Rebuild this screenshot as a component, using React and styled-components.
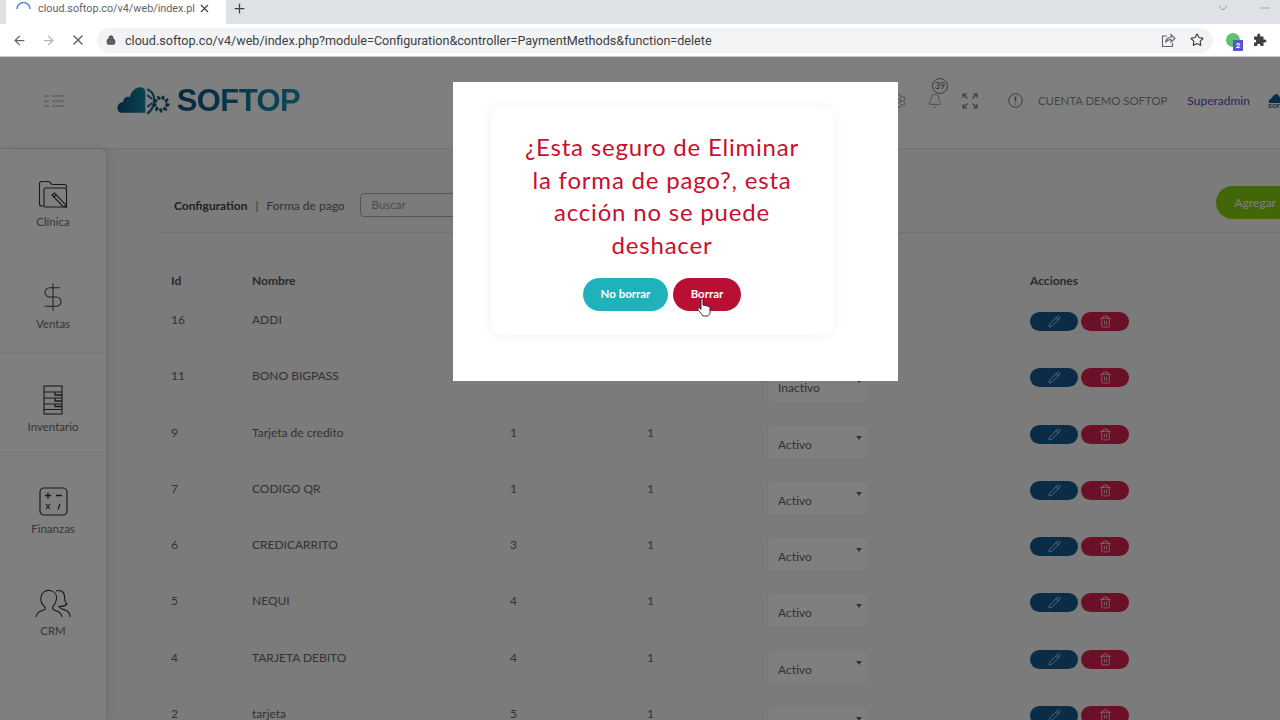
import React from "react";
import styled, { createGlobalStyle } from "styled-components";
import { ArrowLeft, ArrowRight, X, Lock, Star, Plus, ChevronDown, Minus, Pencil, Trash2, Settings, Bell, DollarSign } from "lucide-react";

const Global = createGlobalStyle`
html, body { margin: 0; padding: 0; height: 100%; overflow: hidden; background: #fff; }
* { box-sizing: border-box; }
`

const uiFont = `"Lato", "Open Sans", sans-serif`

const Browser = styled.div`
width: 1280px;
height: 720px;
display: flex;
flex-direction: column;
overflow: hidden;
font-family: ${uiFont};
`

const TabStrip = styled.div`
height: 24px;
flex: none;
background: #dee1e6;
display: flex;
align-items: flex-start;
color: #3c4043;
`

const Tab = styled.div`
width: 220px;
height: 24px;
margin-left: 6px;
padding: 0 8px 7px 10px;
background: #fff;
display: flex;
align-items: center;
gap: 7px;
font: 10.8px Roboto, sans-serif;
color: #5f6368;
`

const TabTitle = styled.span`
width: 153px;
white-space: nowrap;
`

const NewTab = styled.div`
margin-left: 6px;
height: 17px;
display: flex;
align-items: center;
`

const WindowButtons = styled.div`
margin-left: auto;
height: 15px;
display: flex;
align-items: center;
gap: 27px;
padding-right: 8px;
color: #80868b;
`

const Toolbar = styled.div`
height: 33px;
flex: none;
background: #fff;
border-bottom: 1px solid #c9c9c9;
display: flex;
align-items: center;
color: #5f6368;
padding-left: 12px;
`

const NavButtons = styled.div`
display: flex;
align-items: center;
gap: 14px;
width: 85px;
`

const Omnibox = styled.div`
width: 1116px;
height: 25px;
border-radius: 13px;
background: #f1f3f4;
display: flex;
align-items: center;
padding: 0 9px;
gap: 9px;
font: 12.6px Roboto, sans-serif;
color: #3c4043;
`

const Url = styled.span`
flex: 1;
white-space: nowrap;
`

const OmniIcons = styled.div`
display: flex;
align-items: center;
gap: 14px;
`

const Extensions = styled.div`
display: flex;
align-items: center;
gap: 13px;
margin-left: 13px;
`

const ExtBadge = styled.div`
position: relative;
width: 14px;
height: 14px;
border-radius: 50%;
background: #5cc46a;
`

const ExtCount = styled.span`
position: absolute;
left: 7px;
top: 7px;
width: 10px;
height: 11px;
background: #5a52d5;
color: #fff;
font: bold 8px/11px Roboto, sans-serif;
text-align: center;
`

const Page = styled.div`
position: relative;
flex: 1;
min-height: 0;
display: flex;
flex-direction: column;
overflow: hidden;
background: #f6f6f6;
`

const Header = styled.header`
height: 92px;
flex: none;
display: flex;
align-items: center;
background: #fff;
border-bottom: 1px solid #e4e4e4;
padding: 0 0 4px 44px;
white-space: nowrap;
`

const MenuIcon = styled.div`
width: 73px;
flex: none;
display: flex;
color: #9a9a9a;
`

const Brand = styled.div`
flex: none;
width: 183px;
display: flex;
align-items: center;
gap: 3px;
`

const BrandName = styled.span`
font: bold 31px "Liberation Sans", sans-serif;
letter-spacing: -0.6px;
background: linear-gradient(90deg, #0d4c7c, #127a9c 60%, #1b8fae);
-webkit-background-clip: text;
background-clip: text;
color: transparent;
`

const HeaderTools = styled.div`
flex: none;
margin-left: 591px;
display: flex;
align-items: center;
color: #777;
`

const BellWrap = styled.div`
position: relative;
margin-left: 20px;
display: flex;
`

const BellCount = styled.span`
position: absolute;
left: 5px;
top: -15px;
width: 16px;
height: 16px;
border-radius: 50%;
border: 1px solid #777;
background: #fff;
font-size: 9px;
line-height: 14px;
text-align: center;
color: #555;
`

const ToolGap = styled.span`
width: ${(p) => p.$w}px;
`

const Account = styled.span`
margin-left: 15px;
font-size: 11.4px;
color: #8a8a8a;
`

const UserName = styled.span`
margin-left: 20px;
font-size: 12px;
color: #5c47b5;
`

const SmallLogo = styled.div`
margin: 2px 0 0 18px;
width: 30px;
flex: none;
display: flex;
flex-direction: column;
color: #0d5c8a;
font: bold 6px/7px "Liberation Sans", sans-serif;
`

const Body = styled.div`
flex: 1;
min-height: 0;
display: flex;
`

const Sidebar = styled.nav`
width: 106px;
flex: none;
background: #fff;
border-top-right-radius: 8px;
box-shadow: 2px 0 8px rgba(0, 0, 0, 0.12);
display: flex;
flex-direction: column;
`

const SideItem = styled.div`
height: 102.3px;
flex: none;
display: flex;
flex-direction: column;
align-items: center;
justify-content: flex-start;
padding-top: 28px;
border-bottom: 1px solid ${(p) => (p.$last ? "transparent" : "#f2f2f2")};
color: #444;
`

const SideIcon = styled.div`
height: 36px;
display: flex;
align-items: center;
justify-content: center;
`

const SideLabel = styled.span`
margin-top: 2px;
font-size: 11.5px;
color: #6e6e6e;
`

const Main = styled.main`
flex: 1;
min-width: 0;
padding-left: 54px;
`

const TopBar = styled.div`
height: 84px;
width: 1200px;
display: flex;
align-items: center;
padding: 29px 0 0 14px;
border-bottom: 1px solid #e3e3e3;
font-size: 12px;
color: #666;
white-space: nowrap;
`

const Crumb = styled.b`
font-weight: 700;
color: #444;
`

const Sep = styled.span`
margin: 0 8px;
color: #666;
`

const SearchInput = styled.div`
margin-left: 15px;
width: 240px;
height: 24px;
border: 1px solid #aaa;
border-radius: 4px;
padding-left: 11px;
line-height: 22px;
font-size: 11.5px;
color: #999;
`

const AddButton = styled.div`
margin: -6px 0 0 616px;
width: 90px;
height: 33px;
border-radius: 17px;
background: #86cc10;
color: #fff;
font-size: 12px;
line-height: 33px;
padding-left: 19px;
`

const Table = styled.div`
padding-left: 11px;
width: 1100px;
`

const HeadRow = styled.div`
display: grid;
grid-template-columns: 81px 258px 137px 120px 263px 120px;
height: 75px;
padding-top: 40px;
font-size: 12px;
font-weight: 700;
color: #555;
`

const Row = styled.div`
display: grid;
grid-template-columns: 81px 258px 137px 120px 263px 120px;
height: 56.25px;
font-size: 12px;
color: #666;
align-items: start;
`

const Cell = styled.div`
margin-top: 4px;
line-height: 16px;
`

const Select = styled.div`
position: relative;
margin: 5px 0 0 1px;
width: 100px;
height: 33px;
background: #fff;
border-radius: 3px;
box-shadow: 0 0 1px rgba(0, 0, 0, 0.25);
padding: 11px 0 0 10px;
font-size: 12px;
color: #666;
`

const Caret = styled.span`
position: absolute;
right: 6px;
top: 10px;
border-left: 3.5px solid transparent;
border-right: 3.5px solid transparent;
border-top: 4px solid #666;
`

const Actions = styled.div`
display: flex;
gap: 3px;
margin-top: 4px;
`

const ActionButton = styled.div`
width: 48px;
height: 19px;
border-radius: 10px;
background: ${(p) => p.$bg};
color: #fff;
display: flex;
align-items: center;
justify-content: center;
`

const Overlay = styled.div`
position: absolute;
inset: 0;
background: rgba(0, 0, 0, 0.5);
`

const Modal = styled.div`
position: absolute;
left: 453px;
top: 25px;
width: 445px;
height: 299px;
background: #fff;
padding: 25px 65px 0 38px;
`

const Card = styled.div`
width: 342px;
height: 228px;
border-radius: 10px;
box-shadow: 0 0 14px rgba(0, 0, 0, 0.06);
padding: 24px 28px 0;
display: flex;
flex-direction: column;
align-items: center;
`

const Question = styled.h2`
margin: 0;
font-weight: 400;
font-size: 24px;
line-height: 32.5px;
letter-spacing: 0.8px;
text-align: center;
color: #c8102e;
`

const ModalButtons = styled.div`
display: flex;
gap: 5px;
margin-top: 17px;
`

const ModalButton = styled.div`
position: relative;
width: ${(p) => p.$w}px;
height: 33px;
border-radius: 17px;
background: ${(p) => p.$bg};
color: #fff;
font-size: 11.5px;
font-weight: 700;
line-height: 32px;
text-align: center;
`

const Cursor = styled.svg`
position: absolute;
left: 24px;
top: 20px;
`

const rows = [
  { id: 16, name: "ADDI", a: "", b: "", status: "Activo" },
  { id: 11, name: "BONO BIGPASS", a: "", b: "", status: "Inactivo" },
  { id: 9, name: "Tarjeta de credito", a: 1, b: 1, status: "Activo" },
  { id: 7, name: "CODIGO QR", a: 1, b: 1, status: "Activo" },
  { id: 6, name: "CREDICARRITO", a: 3, b: 1, status: "Activo" },
  { id: 5, name: "NEQUI", a: 4, b: 1, status: "Activo" },
  { id: 4, name: "TARJETA DEBITO", a: 4, b: 1, status: "Activo" },
  { id: 2, name: "tarjeta", a: 5, b: 1, status: "" },
]

const FolderIcon = () => (
  <svg width="30" height="30" viewBox="0 0 30 30" fill="none" stroke="#333" strokeWidth="1.1">
    <path d="M6 26H3.5A2 2 0 0 1 1.5 24V3.5A2 2 0 0 1 3.5 1.5H11L14 4.5H26.5A2 2 0 0 1 28.5 6.5V8" />
    <path d="M6 26V10A2 2 0 0 1 8 8H26.5A2 2 0 0 1 28.5 10V27H6" />
    <path d="M14 15L16.5 13L27 24L28 27L25 26.5Z" />
    <path d="M15.5 17.5L18 15" />
  </svg>
)

const InventoryIcon = () => (
  <svg width="20" height="30" viewBox="0 0 20 30" fill="none" stroke="#333" strokeWidth="1.1">
    <rect x="1" y="1" width="18" height="28" />
    <path d="M1 7H19M1 13H19M1 19H19M1 24.5H19" />
    <path d="M12 7V10H19M12 13V16H19M12 19V21.5H19" strokeWidth="1.3" />
  </svg>
)

const CalcIcon = () => (
  <svg width="29" height="29" viewBox="0 0 29 29" fill="none" stroke="#333">
    <rect x="1" y="1" width="27" height="27" rx="4" strokeWidth="1.2" />
    <path d="M6 8.5H12M9 5.5V11.5M17 8.5H23" strokeWidth="1.3" />
    <path d="M7 17L11 22M11 17L7 22M19 22.5L21 17" strokeWidth="1.2" />
  </svg>
)

const PeopleIcon = () => (
  <svg width="36" height="30" viewBox="0 0 36 30" fill="none" stroke="#333" strokeWidth="1.1">
    <path d="M1 28C1.5 23 5 22.5 9 21C10.5 20 10.5 18.5 9.5 17.5C6.5 15.5 5.5 12 6 8C7 3 11 1 15 1.5C19.5 2 22 5.5 21.5 10C21 13 20 15.5 18 17.5C17 18.5 17.5 20 19 21C23 22.5 26 23 27 28" />
    <path d="M21 2C25 0.5 29.5 2.5 29.5 7.5C29.5 11 30 13.5 32 15C30 17 27 17.5 24 17.5C24.5 20 28 20 31 21.5C33.5 22.5 35 25 35 28" />
  </svg>
)

const ExpandIcon = () => (
  <svg width="16" height="16" viewBox="0 0 16 16" fill="none" stroke="#777" strokeWidth="1.1">
    <path d="M1 5V1H5M1 1L5.5 5.5M11 1H15V5M15 1L10.5 5.5M1 11V15H5M1 15L5.5 10.5M15 11V15H11M15 15L10.5 10.5" />
  </svg>
)

const InfoIcon = () => (
  <svg width="15" height="15" viewBox="0 0 15 15" fill="none" stroke="#777" strokeWidth="1">
    <circle cx="7.5" cy="7.5" r="6.8" />
    <path d="M7.5 3.5V8.5M7.5 10.5V11.5" strokeWidth="1.6" />
  </svg>
)

const ShareIcon = () => (
  <svg width="15" height="15" viewBox="0 0 15 15" fill="none" stroke="#5f6368" strokeWidth="1.1">
    <path d="M6 3H1.5V13.5H11.5V10" />
    <path d="M4.5 9.5C5 6 7.5 4.5 10 4.5V1.5L14 5.5L10 9V6.5C8 6.5 6 7.5 4.5 9.5Z" />
  </svg>
)

const PuzzleIcon = () => (
  <svg width="14" height="14" viewBox="0 0 14 14" fill="#3c4043">
    <path d="M1 3.5H4.2C4 1.5 4.8 0.5 5.8 0.5C6.8 0.5 7.5 1.5 7.3 3.5H10.5V6.6C12.5 6.4 13.5 7.1 13.5 8C13.5 9 12.5 9.7 10.5 9.5V13H7.4C7.6 11.5 6.8 10.8 5.8 10.8C4.8 10.8 4 11.5 4.2 13H1V9.7C2.5 9.9 3.2 9 3.2 8.1C3.2 7.2 2.5 6.4 1 6.6Z" />
  </svg>
)

const Spinner = () => (
  <svg width="15" height="15" viewBox="0 0 15 15" fill="none" stroke="#5b8fd9" strokeWidth="1.6">
    <path d="M1 8A6.5 6.5 0 0 1 14 8" />
  </svg>
)

const CloudLogo = () => (
  <svg width="58" height="32" viewBox="0 0 58 32">
    <defs>
      <linearGradient id="cloudFill" x1="0" x2="1" y1="0" y2="0">
        <stop offset="0" stopColor="#0d4c7c" />
        <stop offset="1" stopColor="#1487a5" />
      </linearGradient>
    </defs>
    <path d="M4 28C-1 27 -1 18 6 17C7 12 10 11 13 12C15 5 20 1 25 2C28 3 29 5 29 7V28Z" fill="url(#cloudFill)" />
    <path d="M31 4C36 6 38 11 38 15C38 21 35 26 31 29" fill="none" stroke="#1b6f95" strokeWidth="2.4" />
    <circle cx="45" cy="19" r="6" fill="none" stroke="#14506f" strokeWidth="2.6" strokeDasharray="3 1" />
    <circle cx="45" cy="19" r="8" fill="none" stroke="#14506f" strokeWidth="1.5" strokeDasharray="2.5 3" />
    <path d="M31 10L36 14M31 22L36 18" stroke="#1b6f95" strokeWidth="2" />
  </svg>
)

const SmallCloud = () => (
  <svg width="14" height="9" viewBox="0 0 14 9">
    <path d="M1 9C0 6 2 5 3 5C4 2 7 0 9 0C11 1 12 3 12 5C13 5 14 7 14 9Z" fill="#0d5c8a" />
  </svg>
)

const HandCursor = () => (
  <Cursor width="14" height="19" viewBox="0 0 14 19">
    <path d="M4 1.5C4 0.5 6 0.5 6 1.5V7L11 8.2C12.5 8.6 13 9.3 13 10.5V14C13 16 12 17.5 11 18H6C5 17 2.5 13.5 1 11.5C0.3 10.3 1.6 9.3 2.6 10L4 11.5Z" fill="#fff" stroke="#222" strokeWidth="0.9" />
  </Cursor>
)

const sideItems = [
  { label: "Clínica", icon: <FolderIcon /> },
  { label: "Ventas", icon: <DollarSign size={32} strokeWidth={0.8} /> },
  { label: "Inventario", icon: <InventoryIcon /> },
  { label: "Finanzas", icon: <CalcIcon /> },
  { label: "CRM", icon: <PeopleIcon />, last: true },
]

const App = () => {
  return (
    <Browser>
      <Global />
      <TabStrip>
        <Tab>
          <Spinner />
          <TabTitle>cloud.softop.co/v4/web/index.pl</TabTitle>
          <X size={13} color="#3c4043" />
        </Tab>
        <NewTab><Plus size={15} color="#3c4043" /></NewTab>
        <WindowButtons>
          <ChevronDown size={16} strokeWidth={1.2} />
          <Minus size={14} strokeWidth={1.2} />
        </WindowButtons>
      </TabStrip>
      <Toolbar>
        <NavButtons>
          <ArrowLeft size={15} />
          <ArrowRight size={15} color="#b4b7bb" />
          <X size={16} />
        </NavButtons>
        <Omnibox>
          <Lock size={10} fill="#5f6368" />
          <Url>cloud.softop.co/v4/web/index.php?module=Configuration&amp;controller=PaymentMethods&amp;function=delete</Url>
          <OmniIcons>
            <ShareIcon />
            <Star size={14} color="#3c4043" />
          </OmniIcons>
        </Omnibox>
        <Extensions>
          <ExtBadge><ExtCount>2</ExtCount></ExtBadge>
          <PuzzleIcon />
        </Extensions>
      </Toolbar>
      <Page>
        <Header>
          <MenuIcon>
            <svg width="20" height="12" viewBox="0 0 20 12" stroke="#a8a8a8" strokeWidth="1.2">
              <path d="M0 1H5M8 1H20M0 6H5M8 6H20M0 11H5M8 11H20" />
            </svg>
          </MenuIcon>
          <Brand>
            <CloudLogo />
            <BrandName>SOFTOP</BrandName>
          </Brand>
          <HeaderTools>
            <Settings size={16} strokeWidth={1.1} />
            <BellWrap>
              <Bell size={16} strokeWidth={1.1} />
              <BellCount>39</BellCount>
            </BellWrap>
            <ToolGap $w={19} />
            <ExpandIcon />
            <ToolGap $w={30} />
            <InfoIcon />
            <Account>CUENTA DEMO SOFTOP</Account>
            <UserName>Superadmin</UserName>
            <SmallLogo>
              <SmallCloud />
              SOF
            </SmallLogo>
          </HeaderTools>
        </Header>
        <Body>
          <Sidebar>
            {sideItems.map(({ label, icon, last }) => (
              <SideItem key={label} $last={last}>
                <SideIcon>{icon}</SideIcon>
                <SideLabel>{label}</SideLabel>
              </SideItem>
            ))}
          </Sidebar>
          <Main>
            <TopBar>
              <Crumb>Configuration</Crumb>
              <Sep>|</Sep>
              <span>Forma de pago</span>
              <SearchInput>Buscar</SearchInput>
              <AddButton>Agregar</AddButton>
            </TopBar>
            <Table>
              <HeadRow>
                <span>Id</span>
                <span>Nombre</span>
                <span />
                <span />
                <span />
                <span>Acciones</span>
              </HeadRow>
              {rows.map((row) => (
                <Row key={row.id}>
                  <Cell>{row.id}</Cell>
                  <Cell>{row.name}</Cell>
                  <Cell>{row.a}</Cell>
                  <Cell>{row.b}</Cell>
                  <Select>{row.status}<Caret /></Select>
                  <Actions>
                    <ActionButton $bg="#14588f"><Pencil size={13} strokeWidth={1.3} /></ActionButton>
                    <ActionButton $bg="#d42350"><Trash2 size={13} strokeWidth={1.3} /></ActionButton>
                  </Actions>
                </Row>
              ))}
            </Table>
          </Main>
        </Body>
        <Overlay />
        <Modal>
          <Card>
            <Question>¿Esta seguro de Eliminar la forma de pago?, esta acción no se puede deshacer</Question>
            <ModalButtons>
              <ModalButton $w={85} $bg="#1fb2ba">No borrar</ModalButton>
              <ModalButton $w={68} $bg="#b80f32">Borrar<HandCursor /></ModalButton>
            </ModalButtons>
          </Card>
        </Modal>
      </Page>
    </Browser>
  );
};

export default App;
